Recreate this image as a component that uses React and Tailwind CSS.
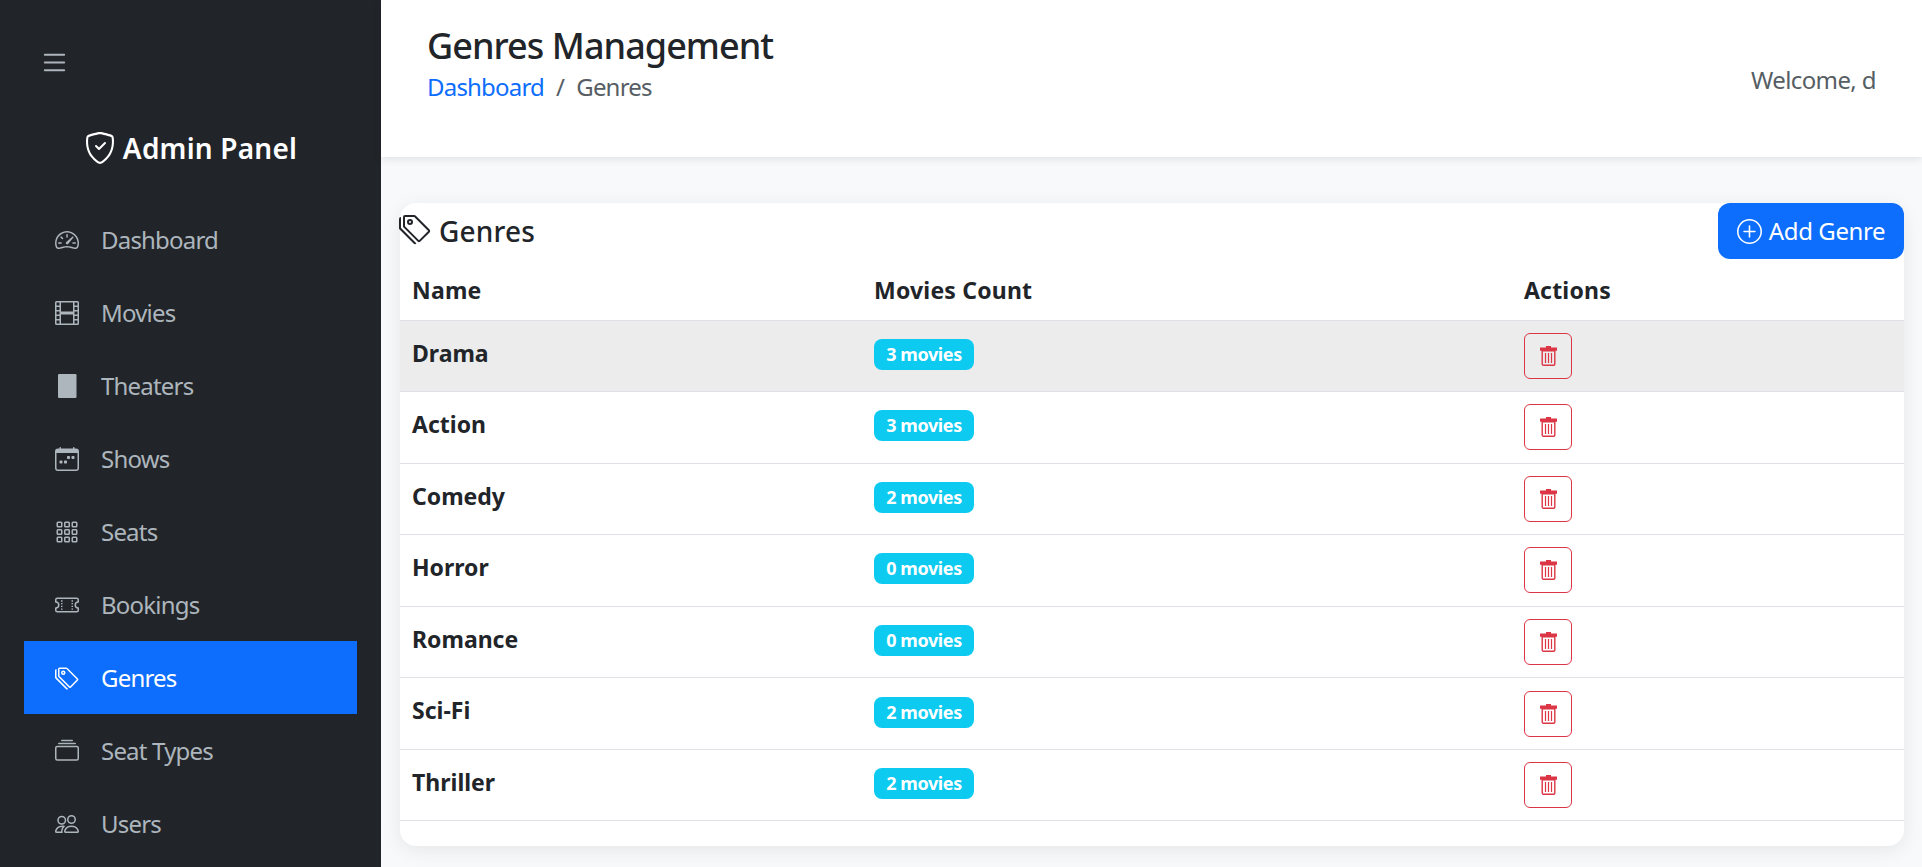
import React from "react";
import { BsList, BsShieldCheck, BsSpeedometer2, BsFilm, BsCalendarWeek, BsGrid3X3Gap, BsTicketPerforated, BsTags, BsCollection, BsPeople, BsPlusCircle } from "react-icons/bs";

const font = "font-['Noto_Sans','Open_Sans',sans-serif]";

const Theater = ({ className }) => (
  <svg viewBox="0 0 24 24" fill="currentColor" className={className}>
    <rect x="3" y="0" width="18.5" height="24" rx="1" />
  </svg>
);

const Trash = ({ className }) => (
  <svg viewBox="0 0 17 20" className={className}>
    <path d="M6 0h5v1.4h6v3.3H0V1.4h6z" fill="currentColor" />
    <path d="M2.2 4.7h12.6v13.2a1.4 1.4 0 0 1-1.4 1.4H3.6a1.4 1.4 0 0 1-1.4-1.4z" fill="none" stroke="currentColor" strokeWidth="1.4" />
    <path d="M5.5 7v10M8.5 7v10M11.5 7v10" stroke="currentColor" strokeWidth="1.2" fill="none" />
  </svg>
);

const nav = [
  ["Dashboard", BsSpeedometer2],
  ["Movies", BsFilm],
  ["Theaters", Theater],
  ["Shows", BsCalendarWeek],
  ["Seats", BsGrid3X3Gap],
  ["Bookings", BsTicketPerforated],
  ["Genres", BsTags, true],
  ["Seat Types", BsCollection],
  ["Users", BsPeople],
];

const rows = [
  ["Drama", "3 movies", true],
  ["Action", "3 movies"],
  ["Comedy", "2 movies"],
  ["Horror", "0 movies"],
  ["Romance", "0 movies"],
  ["Sci-Fi", "2 movies"],
  ["Thriller", "2 movies"],
];

export default function App() {
  return (
    <div className={`${font} flex h-[867px] overflow-hidden bg-[#f8f9fa] text-[#212529]`}>
      <aside className="w-[381px] shrink-0 bg-[#212529] px-6 pt-6 overflow-hidden">
        <div className="h-[102px] pl-[15px] pt-[23px] text-[#adb5bd]">
          <BsList className="w-[31px] h-[31px]" />
        </div>
        <div className="flex items-center justify-center gap-[7px] h-[44px] text-white text-[28px] leading-none font-semibold tracking-[0.2px]">
          <BsShieldCheck className="w-[32px] h-[32px]" />
          <span>Admin Panel</span>
        </div>
        <nav className="mt-[33px] flex flex-col">
          {nav.map(([label, Icon, active]) => (
            <div key={label} className={`flex items-center h-[73px] pl-[31px] text-[24px] tracking-[-0.8px] ${active ? "bg-[#0d6efd] text-white" : "text-[#adb5bd]"}`}>
              <Icon className="w-6 h-6 mr-[22px] shrink-0" />
              <span>{label}</span>
            </div>
          ))}
        </nav>
      </aside>
      <main className="flex-1 min-w-0">
        <header className="h-[157px] bg-white shadow-[0_2px_8px_rgba(0,0,0,0.1)] flex justify-between items-start px-[46px] pt-[22px]">
          <div>
            <h1 className="text-[36px] leading-[48px] font-medium tracking-[-0.95px]">Genres Management</h1>
            <div className="flex text-[24px] leading-[36px] -mt-[1px] tracking-[-0.8px]">
              <span className="text-[#0d6efd]">Dashboard</span>
              <span className="text-[#565e64] px-3">/</span>
              <span className="text-[#565e64]">Genres</span>
            </div>
          </div>
          <div className="text-[24px] text-[#565e64] mt-[40px] tracking-[-0.6px]">Welcome, d</div>
        </header>
        <section className="ml-[19px] mr-[18px] mt-[46px] h-[643px] bg-white rounded-[16px] shadow-[0_4px_20px_rgba(0,0,0,0.08)]">
          <div className="flex justify-between items-start h-[56px]">
            <div className="flex items-center gap-[8px] h-[56px] text-[28px] font-medium tracking-[0.2px]">
              <BsTags className="w-[32px] h-[32px] -mt-[4px] -ml-[1px]" />
              <span>Genres</span>
            </div>
            <button className="h-[56px] w-[186px] rounded-[12px] bg-[#0d6efd] text-white text-[24px] tracking-[-0.4px] flex items-center justify-center gap-[7px]">
              <BsPlusCircle className="w-[25px] h-[25px]" />
              Add Genre
            </button>
          </div>
          <table className="w-full table-fixed border-collapse">
            <thead>
              <tr className="h-[61px] border-b border-[#dee2e6] text-[23px] font-bold text-left tracking-[0.2px]">
                <th className="w-[474px] pl-3 pt-[2px]">Name</th>
                <th className="w-[650px] pt-[2px]">Movies Count</th>
                <th className="pt-[2px]">Actions</th>
              </tr>
            </thead>
            <tbody>
              {rows.map(([name, count, hover]) => (
                <tr key={name} className={`h-[71.57px] border-b border-[#dee2e6] ${hover ? "bg-[#ececec]" : ""}`}>
                  <td className="pl-3 text-[23px] font-bold pb-[6px]">{name}</td>
                  <td className="pb-[3px]">
                    <span className="inline-flex items-center justify-center w-[100px] h-[31px] rounded-[8px] bg-[#0dcaf0] text-white text-[18px] tracking-[-0.4px] font-bold">{count}</span>
                  </td>
                  <td>
                    <button className="flex items-center justify-center w-[48px] h-[46px] border border-[#dc3545] rounded-[6px] text-[#dc3545]">
                      <Trash className="w-[17px] h-[20px]" />
                    </button>
                  </td>
                </tr>
              ))}
            </tbody>
          </table>
        </section>
      </main>
    </div>
  );
}
